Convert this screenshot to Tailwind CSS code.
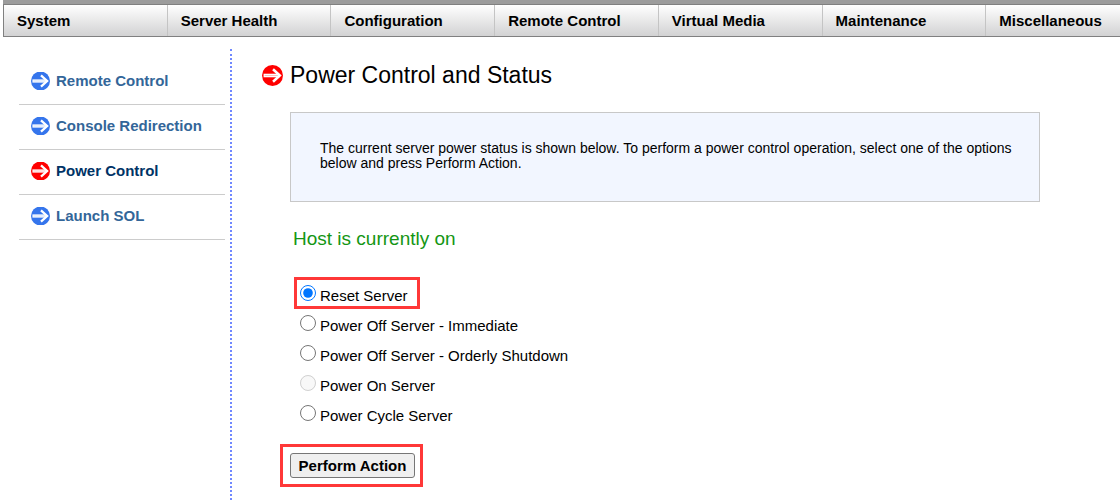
<!DOCTYPE html>
<html lang="en">
<head>
    <meta charset="UTF-8">
    <meta name="viewport" content="width=device-width, initial-scale=1.0">
    <title>Power Control and Status</title>
    <script src="https://cdn.jsdelivr.net/npm/@tailwindcss/browser@4"></script>
</head>
<body class="bg-white min-h-screen flex flex-col font-['Liberation_Sans',Arial,sans-serif] text-black overflow-x-hidden">
    <!-- Shared arrow icon -->
    <svg class="hidden">
        <symbol id="arrow" viewBox="0 0 20 20" preserveAspectRatio="xMidYMid slice">
            <circle cx="10" cy="10" r="10" fill="currentColor" />
            <path d="M1.5 10H16" stroke="#fff" stroke-width="3.4" />
            <path d="M10.5 4L17 10L10.5 16" fill="none" stroke="#fff" stroke-width="2.4" />
            <path d="M2.5 10H15" stroke="currentColor" stroke-width="0.8" opacity="0.3" />
        </symbol>
    </svg>

    <!-- Top menu -->
    <header class="ml-[3px] border-t-4 border-[#9c9c9c] overflow-hidden">
        <nav class="min-w-[1148px] h-[33px] grid grid-cols-7 border border-[#808080] bg-linear-to-b from-white to-[#d2d2d3] text-[15px] font-bold">
            <a href="#" class="pl-[13px] leading-[31px] border-r border-[#c4c4c4]">System</a>
            <a href="#" class="pl-[13px] leading-[31px] border-r border-[#c4c4c4]">Server Health</a>
            <a href="#" class="pl-[13px] leading-[31px] border-r border-[#c4c4c4]">Configuration</a>
            <a href="#" class="pl-[13px] leading-[31px] border-r border-[#c4c4c4]">Remote Control</a>
            <a href="#" class="pl-[13px] leading-[31px] border-r border-[#c4c4c4]">Virtual Media</a>
            <a href="#" class="pl-[13px] leading-[31px] border-r border-[#c4c4c4]">Maintenance</a>
            <a href="#" class="pl-[13px] leading-[31px]">Miscellaneous</a>
        </nav>
    </header>

    <div class="flex flex-1 pt-3">
        <!-- Side menu -->
        <aside class="w-[232px] shrink-0 pl-[19px] pr-[5px] pt-[11px] border-r-2 border-dotted border-[#7088ff] text-[15px] font-bold text-[#336699]">
            <a href="#" class="flex items-center gap-[6px] h-[45px] pl-3 pb-[2px] border-b border-[#cccccc]">
                <svg class="w-[19px] h-[18px] text-[#3575ec]"><use href="#arrow" /></svg>
                Remote Control
            </a>
            <a href="#" class="flex items-center gap-[6px] h-[45px] pl-3 pb-[2px] border-b border-[#cccccc]">
                <svg class="w-[19px] h-[18px] text-[#3575ec]"><use href="#arrow" /></svg>
                Console Redirection
            </a>
            <a href="#" class="flex items-center gap-[6px] h-[45px] pl-3 pb-[2px] border-b border-[#cccccc] text-[#003366]">
                <svg class="w-[19px] h-[18px] text-[#ff0000]"><use href="#arrow" /></svg>
                Power Control
            </a>
            <a href="#" class="flex items-center gap-[6px] h-[45px] pl-3 pb-[2px] border-b border-[#cccccc]">
                <svg class="w-[19px] h-[18px] text-[#3575ec]"><use href="#arrow" /></svg>
                Launch SOL
            </a>
        </aside>

        <!-- Main content -->
        <main class="flex-1 pl-[30px] pr-20 pt-3">
            <h1 class="flex items-center gap-[7px] text-[23px] leading-[28px]">
                <svg class="w-[21px] h-[21px] text-[#ff0000]"><use href="#arrow" /></svg>
                Power Control and Status
            </h1>

            <div class="ml-7 mt-[23px] h-[90px] pl-[29px] pr-4 pt-[28px] border border-[#c8c8c8] bg-[#f2f6ff] text-[14px] leading-[15px]">
                <p>The current server power status is shown below. To perform a power control operation, select one of the options below and press Perform Action.</p>
            </div>

            <p class="ml-[31px] mt-6 text-[19px] leading-[26px] text-[#149614]">Host is currently on</p>

            <form class="ml-7 mt-[25px] text-[15px]">
                <div class="flex flex-col items-start">
                    <label class="flex ml-1 h-8 w-[126px] pl-[3px] pt-[5px] gap-1 border-3 border-[#ff3838] leading-[22px]">
                        <input type="radio" name="action" value="reset" checked class="size-4 accent-[#0075ff]">
                        Reset Server
                    </label>
                    <label class="flex h-[30px] pl-[10px] pt-[6px] gap-1 leading-[22px]">
                        <input type="radio" name="action" value="off" class="size-4">
                        Power Off Server - Immediate
                    </label>
                    <label class="flex h-[30px] pl-[10px] pt-[6px] gap-1 leading-[22px]">
                        <input type="radio" name="action" value="shutdown" class="size-4">
                        Power Off Server - Orderly Shutdown
                    </label>
                    <label class="flex h-[30px] pl-[10px] pt-[6px] gap-1 leading-[22px]">
                        <input type="radio" name="action" value="on" disabled class="size-4">
                        Power On Server
                    </label>
                    <label class="flex h-[30px] pl-[10px] pt-[6px] gap-1 leading-[22px]">
                        <input type="radio" name="action" value="cycle" class="size-4">
                        Power Cycle Server
                    </label>
                </div>
                <div class="-ml-[10px] mt-[15px] w-[143px] h-[43px] pl-[7px] pt-[6px] border-3 border-[#ff3838]">
                    <button type="button" class="block w-[125px] h-[25px] border border-[#767676] rounded-[3px] bg-[#efefef] leading-[24px] font-bold">Perform Action</button>
                </div>
            </form>
        </main>
    </div>
</body>
</html>
